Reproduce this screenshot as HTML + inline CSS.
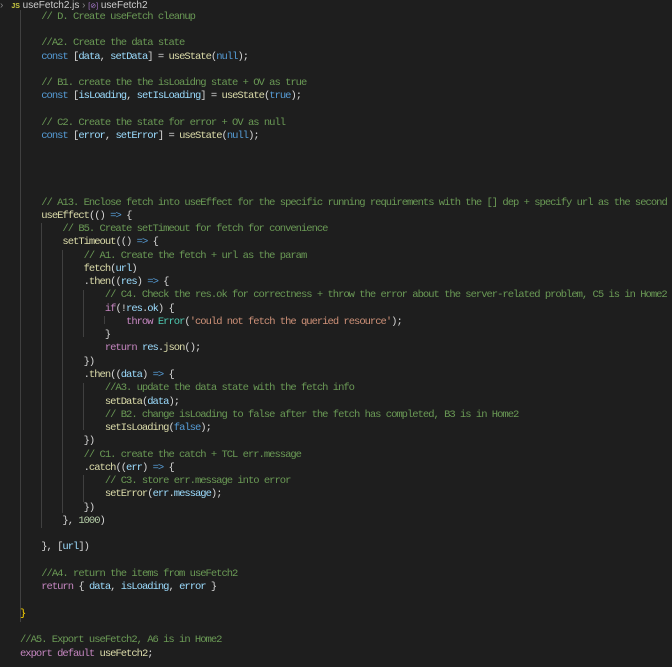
<!DOCTYPE html>
<html><head><meta charset="utf-8"><style>
html,body{margin:0;padding:0;background:#1e1e1e;width:672px;height:667px;overflow:hidden;position:relative}
.bar{position:absolute;left:0;top:0;width:672px;height:11px;background:#1e1e1e;font:10px "Liberation Sans",sans-serif;color:#ccc;line-height:11px;white-space:nowrap}
.bar .js{color:#cbcb41;font-weight:bold;font-size:7px;margin-left:8px}
.bar .ic{color:#b180d7;font-size:7px}
pre{position:absolute;left:20px;top:10.8px;margin:0;font-family:"Liberation Mono",monospace;font-size:10.5px;letter-spacing:-1px;line-height:13.27px;color:#d4d4d4;white-space:pre}
.c{color:#6a9955}.k{color:#569cd6}.v{color:#9cdcfe}.f{color:#dcdcaa}.s{color:#ce9178}.p{color:#c586c0}.t{color:#4ec9b0}.n{color:#b5cea8}.y{color:#ffd700}
.g{position:absolute;width:1px;background:#404040}
</style></head><body>
<div class="bar"><span style="color:#888">›</span><span class="js">JS</span> useFetch2.js <span style="color:#888">›</span> <span class="ic">[⊘]</span> useFetch2</div>
<div class="g" style="left:20px;top:10px;height:612px"></div>
<div class="g" style="left:41px;top:223px;height:305px"></div>
<div class="g" style="left:62px;top:250px;height:263px"></div>
<div class="g" style="left:83px;top:290px;height:47px"></div>
<div class="g" style="left:83px;top:383px;height:47px"></div>
<div class="g" style="left:83px;top:475px;height:27px"></div>
<div class="g" style="left:104px;top:316px;height:8px"></div>
<pre>    <span class="c">// D. Create useFetch cleanup</span>

    <span class="c">//A2. Create the data state</span>
    <span class="k">const</span> [<span class="v">data</span>, <span class="v">setData</span>] = <span class="f">useState</span>(<span class="k">null</span>);

    <span class="c">// B1. create the the isLoaidng state + OV as true</span>
    <span class="k">const</span> [<span class="v">isLoading</span>, <span class="v">setIsLoading</span>] = <span class="f">useState</span>(<span class="k">true</span>);

    <span class="c">// C2. Create the state for error + OV as null</span>
    <span class="k">const</span> [<span class="v">error</span>, <span class="v">setError</span>] = <span class="f">useState</span>(<span class="k">null</span>);




    <span class="c">// A13. Enclose fetch into useEffect for the specific running requirements with the [] dep + specify url as the second</span>
    <span class="f">useEffect</span>(() <span class="k">=&gt;</span> {
        <span class="c">// B5. Create setTimeout for fetch for convenience</span>
        <span class="f">setTimeout</span>(() <span class="k">=&gt;</span> {
            <span class="c">// A1. Create the fetch + url as the param</span>
            <span class="f">fetch</span>(<span class="v">url</span>)
            .<span class="f">then</span>((<span class="v">res</span>) <span class="k">=&gt;</span> {
                <span class="c">// C4. Check the res.ok for correctness + throw the error about the server-related problem, C5 is in Home2</span>
                <span class="p">if</span>(!<span class="v">res</span>.<span class="v">ok</span>) {
                    <span class="p">throw</span> <span class="t">Error</span>(<span class="s">'could not fetch the queried resource'</span>);
                }
                <span class="p">return</span> <span class="v">res</span>.<span class="f">json</span>();
            })
            .<span class="f">then</span>((<span class="v">data</span>) <span class="k">=&gt;</span> {
                <span class="c">//A3. update the data state with the fetch info</span>
                <span class="f">setData</span>(<span class="v">data</span>);
                <span class="c">// B2. change isLoading to false after the fetch has completed, B3 is in Home2</span>
                <span class="f">setIsLoading</span>(<span class="k">false</span>);
            })
            <span class="c">// C1. create the catch + TCL err.message</span>
            .<span class="f">catch</span>((<span class="v">err</span>) <span class="k">=&gt;</span> {
                <span class="c">// C3. store err.message into error</span>
                <span class="f">setError</span>(<span class="v">err</span>.<span class="v">message</span>);
            })
        }, <span class="n">1000</span>)

    }, [<span class="v">url</span>])

    <span class="c">//A4. return the items from useFetch2</span>
    <span class="p">return</span> { <span class="v">data</span>, <span class="v">isLoading</span>, <span class="v">error</span> }

<span class="y">}</span>

<span class="c">//A5. Export useFetch2, A6 is in Home2</span>
<span class="p">export</span> <span class="p">default</span> <span class="f">useFetch2</span>;</pre>
</body></html>
